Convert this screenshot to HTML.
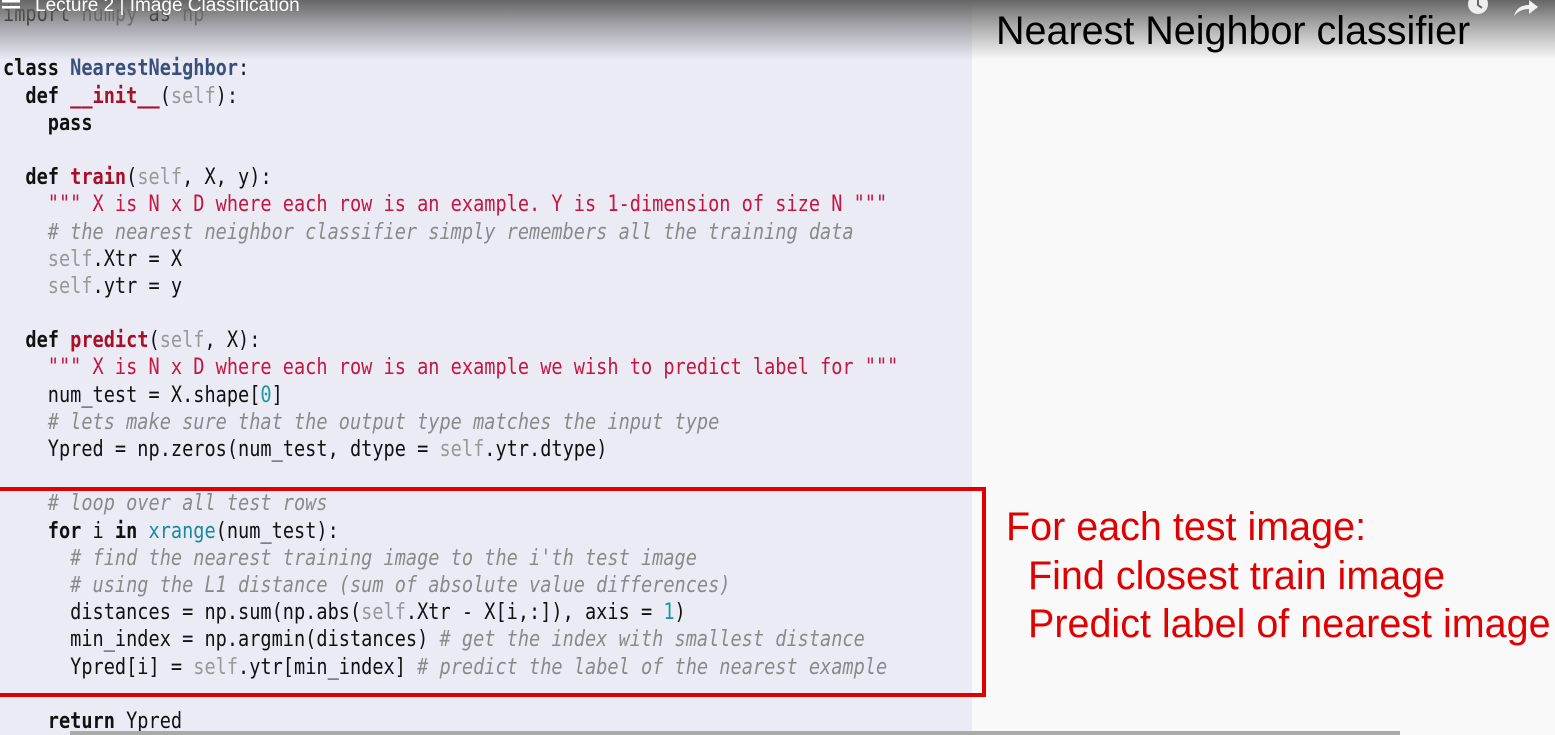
<!DOCTYPE html>
<html><head><meta charset="utf-8"><style>
html,body{margin:0;padding:0;}
body{width:1555px;height:735px;overflow:hidden;background:#f9f9f9;position:relative;font-family:"Liberation Sans",sans-serif;}
#panel{position:absolute;left:0;top:0;width:972px;height:735px;background:#ebebf6;}
#code{position:absolute;left:3px;top:1px;margin:0;font-family:"DejaVu Sans Mono",monospace;font-size:22px;line-height:27.2px;color:#111;transform-origin:0 0;transform:scaleX(0.845);font-weight:bold;}
#code .line{height:27.2px;white-space:pre;}
.n{color:#3a4f7a}
.f{color:#a8102a}
.s{color:#999;font-weight:normal}
.st{color:#c4163e;font-weight:normal}
.c{color:#8a8a8a;font-style:italic;font-weight:normal}
.num{color:#1a9a9a;font-weight:normal}
.b{color:#1a8aa0;font-weight:normal}
.r{font-weight:normal}
#box{position:absolute;left:-4px;top:487px;width:982px;height:202px;border:4px solid #e00000;}
#title{position:absolute;left:996px;top:9px;font-size:39.5px;color:#000;white-space:nowrap;}
.red{position:absolute;font-size:39.5px;color:#e00000;white-space:nowrap;}
#grad{position:absolute;left:0;top:0;width:1555px;height:60px;background:linear-gradient(#666 0%,rgba(100,100,100,0.55) 40%,rgba(120,120,120,0) 100%);}
#yt{position:absolute;left:35px;top:-5px;color:#fff;font-size:19px;}
#bot{position:absolute;left:70px;top:731px;width:1330px;height:4px;background:#aaa;}
</style></head><body>
<div id="panel"></div>
<div id="code"><div class="line"><span class="r">import </span><span class="r" style="color:#777">numpy </span><span class="r">as </span><span class="r" style="color:#777">np</span></div><div class="line"></div><div class="line">class <span class="n">NearestNeighbor</span><span class="r">:</span></div><div class="line">  def <span class="f">__init__</span><span class="r">(</span><span class="s">self</span><span class="r">):</span></div><div class="line">    pass</div><div class="line"></div><div class="line">  def <span class="f">train</span><span class="r">(</span><span class="s">self</span><span class="r">, X, y):</span></div><div class="line"><span class="st">    """ X is N x D where each row is an example. Y is 1-dimension of size N """</span></div><div class="line"><span class="c">    # the nearest neighbor classifier simply remembers all the training data</span></div><div class="line"><span class="s">    self</span><span class="r">.Xtr = X</span></div><div class="line"><span class="s">    self</span><span class="r">.ytr = y</span></div><div class="line"></div><div class="line">  def <span class="f">predict</span><span class="r">(</span><span class="s">self</span><span class="r">, X):</span></div><div class="line"><span class="st">    """ X is N x D where each row is an example we wish to predict label for """</span></div><div class="line"><span class="r">    num_test = X.shape[</span><span class="num">0</span><span class="r">]</span></div><div class="line"><span class="c">    # lets make sure that the output type matches the input type</span></div><div class="line"><span class="r">    Ypred = np.zeros(num_test, dtype = </span><span class="s">self</span><span class="r">.ytr.dtype)</span></div><div class="line"></div><div class="line"><span class="c">    # loop over all test rows</span></div><div class="line">    for <span class="r">i</span> in <span class="b">xrange</span><span class="r">(num_test):</span></div><div class="line"><span class="c">      # find the nearest training image to the i'th test image</span></div><div class="line"><span class="c">      # using the L1 distance (sum of absolute value differences)</span></div><div class="line"><span class="r">      distances = np.sum(np.abs(</span><span class="s">self</span><span class="r">.Xtr - X[i,:]), axis = </span><span class="num">1</span><span class="r">)</span></div><div class="line"><span class="r">      min_index = np.argmin(distances) </span><span class="c"># get the index with smallest distance</span></div><div class="line"><span class="r">      Ypred[i] = </span><span class="s">self</span><span class="r">.ytr[min_index] </span><span class="c"># predict the label of the nearest example</span></div><div class="line"></div><div class="line">    return <span class="r">Ypred</span></div></div>
<div id="box"></div>
<div id="grad"></div>
<div id="yt">Lecture 2 | Image Classification</div>
<svg style="position:absolute;left:2px;top:0" width="22" height="14"><rect x="0" y="0" width="18" height="2.5" fill="#fff"/><rect x="0" y="6" width="18" height="2.5" fill="#fff"/></svg>
<div id="title">Nearest Neighbor classifier</div>
<div class="red" style="left:1006px;top:505px">For each test image:</div>
<div class="red" style="left:1028px;top:554px">Find closest train image</div>
<div class="red" style="left:1028px;top:602px">Predict label of nearest image</div>
<svg style="position:absolute;left:1468px;top:0" width="20" height="18"><circle cx="10" cy="4" r="10" fill="#eee"/><path d="M10 -2 V5 L14 8" stroke="#666" stroke-width="2" fill="none"/></svg>
<svg style="position:absolute;left:1512px;top:0" width="28" height="18"><path d="M2 16 C4 8 10 5 17 5 V0 L26 7 L17 14 V9 C11 9 6 11 2 16Z" fill="#f2f2f2"/></svg>
<div id="bot"></div>
</body></html>
